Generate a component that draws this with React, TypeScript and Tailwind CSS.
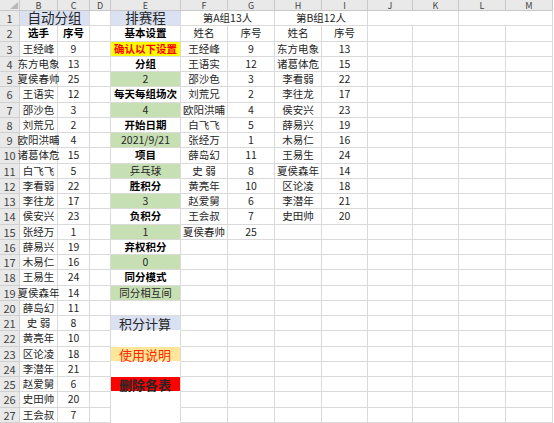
import React from "react";

const W = [20, 38, 32, 21, 70, 47, 47, 47, 46, 45, 46, 47, 47];
const LETTERS = ["B", "C", "D", "E", "F", "G", "H", "I", "J", "K", "L", "M"];
const HEIGHTS = [15, 16, 15, 15, 15, 16, 15, 15, 15, 16, 15, 15, 15, 16, 15, 15, 15, 16, 15, 15, 15, 16, 15, 15, 15, 16, 15];

const WCLS: Record<number, string> = {
  20: "w-[20px]",
  21: "w-[21px]",
  32: "w-[32px]",
  38: "w-[38px]",
  45: "w-[45px]",
  46: "w-[46px]",
  47: "w-[47px]",
  70: "w-[70px]",
  91: "w-[91px]",
  93: "w-[93px]",
  94: "w-[94px]",
};
const HCLS: Record<number, string> = { 15: "h-[15px]", 16: "h-[16px]" };

type Cell = { span?: number; text?: string; cls?: string };

const roster: [string, string][] = [
  ["王经峰", "9"], ["东方电象", "13"], ["夏侯春帅", "25"], ["王语实", "12"], ["邵沙色", "3"],
  ["刘荒兄", "2"], ["欧阳洪晡", "4"], ["诸葛体危", "15"], ["白飞飞", "5"], ["李看弱", "22"],
  ["李往龙", "17"], ["侯安兴", "23"], ["张经万", "1"], ["薛易兴", "19"], ["木易仁", "16"],
  ["王易生", "24"], ["夏侯森年", "14"], ["薛岛幻", "11"], ["史 弱", "8"], ["黄亮年", "10"],
  ["区论凌", "18"], ["李潜年", "21"], ["赵爱舅", "6"], ["史田帅", "20"], ["王会叔", "7"],
];
const groupA: [string, string][] = [
  ["王经峰", "9"], ["王语实", "12"], ["邵沙色", "3"], ["刘荒兄", "2"], ["欧阳洪晡", "4"],
  ["白飞飞", "5"], ["张经万", "1"], ["薛岛幻", "11"], ["史 弱", "8"], ["黄亮年", "10"],
  ["赵爱舅", "6"], ["王会叔", "7"], ["夏侯春帅", "25"],
];
const groupB: [string, string][] = [
  ["东方电象", "13"], ["诸葛体危", "15"], ["李看弱", "22"], ["李往龙", "17"], ["侯安兴", "23"],
  ["薛易兴", "19"], ["木易仁", "16"], ["王易生", "24"], ["夏侯森年", "14"], ["区论凌", "18"],
  ["李潜年", "21"], ["史田帅", "20"],
];

const LABEL = "font-bold text-black";
const GREEN = "bg-[#c6e0b4]";
const eCol: Record<number, Cell> = {
  2: { text: "基本设置", cls: LABEL },
  3: { text: "确认以下设置", cls: "bg-[#ffff00] text-[#ff0000] font-bold" },
  4: { text: "分组", cls: LABEL },
  5: { text: "2", cls: GREEN },
  6: { text: "每天每组场次", cls: LABEL },
  7: { text: "4", cls: GREEN },
  8: { text: "开始日期", cls: LABEL },
  9: { text: "2021/9/21", cls: GREEN },
  10: { text: "项目", cls: LABEL },
  11: { text: "乒乓球", cls: GREEN },
  12: { text: "胜积分", cls: LABEL },
  13: { text: "3", cls: GREEN },
  14: { text: "负积分", cls: LABEL },
  15: { text: "1", cls: GREEN },
  16: { text: "弃权积分", cls: LABEL },
  17: { text: "0", cls: GREEN },
  18: { text: "同分模式", cls: LABEL },
  19: { text: "同分相互间", cls: GREEN },
  20: { text: "" },
  21: { text: "积分计算", cls: "bg-[#d9e1f2] text-[#333] text-[13px] justify-start pl-[8px] border-b-white" },
  22: { text: "", cls: "border-b-white" },
  23: { text: "使用说明", cls: "bg-[#ffe699] text-[#ff2a00] text-[13px] justify-start pl-[8px] border-b-white" },
  24: { text: "", cls: "border-b-white" },
  25: { text: "删除各表", cls: "bg-[#ff0000] text-[#2a0000] font-bold text-[13px] justify-start pl-[8px] border-b-white" },
  26: { text: "", cls: "border-b-white" },
  27: { text: "", cls: "border-b-white" },
};

function buildRow(r: number): Cell[] {
  if (r === 1) {
    return [
      { span: 2, text: "自动分组", cls: "bg-[#d9e1f2] text-[13.5px] text-[#222]" },
      { text: "" },
      { text: "排赛程", cls: "bg-[#d9e1f2] text-[13.5px] text-[#222]" },
      { span: 2, text: "第A组13人" },
      { span: 2, text: "第B组12人" },
      { span: 2, text: "" },
      { span: 2, text: "" },
    ];
  }
  if (r === 2) {
    return [
      { text: "选手", cls: LABEL },
      { text: "序号", cls: LABEL },
      { text: "" },
      eCol[2],
      { text: "姓名" },
      { text: "序号" },
      { text: "姓名" },
      { text: "序号" },
      {}, {}, {}, {},
    ];
  }
  const p = roster[r - 3];
  const a = groupA[r - 3];
  const b = groupB[r - 3];
  return [
    { text: p[0] },
    { text: p[1] },
    { text: "" },
    eCol[r] ?? { text: "" },
    { text: a ? a[0] : "" },
    { text: a ? a[1] : "" },
    { text: b ? b[0] : "" },
    { text: b ? b[1] : "" },
    {}, {}, {}, {},
  ];
}

function Corner() {
  return (
    <div className="w-[20px] h-[11px] shrink-0 bg-[#e9e9e9] border-r border-b border-[#c8c8c8] flex items-end justify-end">
      <svg width="8" height="7" viewBox="0 0 8 7" className="mb-[1px] mr-[1px]">
        <polygon points="8,0 8,7 0,7" fill="#b9b9b9" />
      </svg>
    </div>
  );
}

export default function App() {
  const rows = Array.from({ length: 27 }, (_, i) => i + 1);
  return (
    <div
      className="w-[554px] h-[423px] overflow-hidden bg-white flex flex-col"
      style={{ fontFamily: '"Noto Sans CJK SC", "Noto Sans", sans-serif' }}
    >
      <div className="flex shrink-0 relative z-10">
        <Corner />
        {LETTERS.map((l, i) => (
          <div
            key={l}
            className={`${WCLS[W[i + 1]]} h-[11px] shrink-0 bg-[#e9e9e9] border-r border-b border-[#c8c8c8] flex items-center justify-center text-[9px] leading-none text-[#444]`}
          >
            {l}
          </div>
        ))}
      </div>
      {rows.map((r) => {
        const cells = buildRow(r);
        let col = 1;
        return (
          <div key={r} className="flex shrink-0">
            <div
              className={`w-[20px] ${HCLS[HEIGHTS[r - 1]]} shrink-0 bg-[#e9e9e9] border-r border-b border-[#d0d0d0] flex items-center justify-center text-[11px] leading-none text-[#444]`}
            >
              {r}
            </div>
            {cells.map((c, i) => {
              const span = c.span ?? 1;
              let w = 0;
              for (let k = 0; k < span; k++) w += W[col + k];
              col += span;
              return (
                <div
                  key={i}
                  className={`${WCLS[w]} ${HCLS[HEIGHTS[r - 1]]} shrink-0 flex items-center justify-center whitespace-nowrap overflow-visible border-r border-b border-[#dadada] text-[10.5px] leading-none text-[#262626] ${c.cls ?? ""}`}
                >
                  {c.text}
                </div>
              );
            })}
          </div>
        );
      })}
    </div>
  );
}
